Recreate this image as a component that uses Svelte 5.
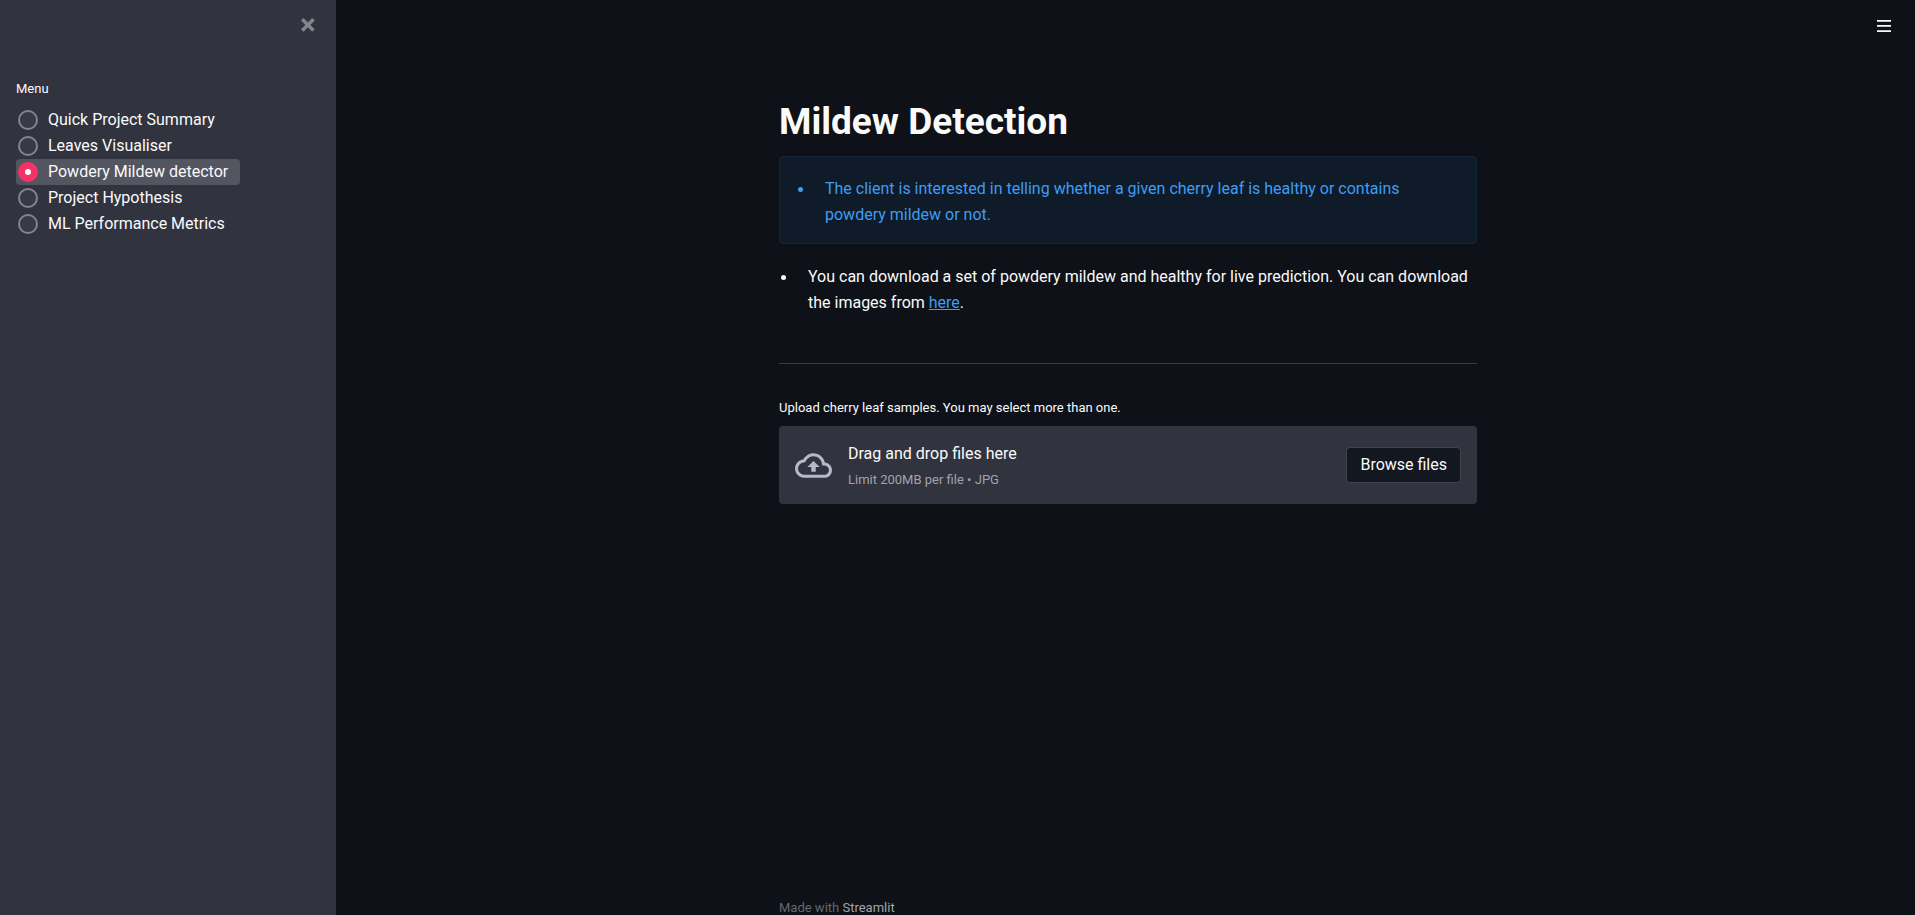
<script>
  const pages = [
    'Quick Project Summary',
    'Leaves Visualiser',
    'Powdery Mildew detector',
    'Project Hypothesis',
    'ML Performance Metrics'
  ];
  let page = $state('Powdery Mildew detector');
  let picker;
</script>

<div class="app">
  <aside class="sidebar">
    <div class="sidebar-top">
      <button class="icon-button close" aria-label="Close sidebar">
        <svg viewBox="0 0 8 8" width="14" height="14" fill="currentColor"><path d="M1.41 0l-1.41 1.41.72.72 1.78 1.81-1.78 1.78-.72.69 1.41 1.44.72-.72 1.81-1.81 1.78 1.81.69.72 1.44-1.44-.72-.69-1.81-1.78 1.81-1.81.72-.72-1.44-1.41-.69.72-1.78 1.78-1.81-1.78-.72-.72z" /></svg>
      </button>
    </div>
    <fieldset class="menu">
      <legend>Menu</legend>
      {#each pages as name}
        <label class="option" class:active={page === name}>
          <input type="radio" name="page" value={name} bind:group={page} />
          <span>{name}</span>
        </label>
      {/each}
    </fieldset>
  </aside>

  <div class="content">
    <header class="toolbar">
      <button class="icon-button" aria-label="Main menu">
        <svg viewBox="0 0 8 8" width="14" height="14" fill="currentColor"><path d="M0 .5v1h8v-1h-8zm0 2.97v1h8v-1h-8zm0 3v1h8v-1h-8z" /></svg>
      </button>
    </header>

    <main class="column">
      <h1>Mildew Detection</h1>

      <div class="alert">
        <ul>
          <li><p>The client is interested in telling whether a given cherry leaf is healthy or contains powdery mildew or not.</p></li>
        </ul>
      </div>

      <ul class="notes">
        <li><p>You can download a set of powdery mildew and healthy for live prediction. You can download the images from <a href="#images">here</a>.</p></li>
      </ul>

      <hr />

      <label class="upload-label" for="samples">Upload cherry leaf samples. You may select more than one.</label>
      <section class="dropzone">
        <svg class="cloud" viewBox="0 0 24 24" width="37" height="37" fill="currentColor"><path d="M19.35 10.04C18.67 6.59 15.64 4 12 4 9.11 4 6.6 5.64 5.35 8.04 2.34 8.36 0 10.91 0 14c0 3.31 2.69 6 6 6h13c2.76 0 5-2.24 5-5 0-2.64-2.05-4.78-4.65-4.96zM19 18H6c-2.21 0-4-1.79-4-4 0-2.05 1.53-3.76 3.56-3.97l1.07-.11.5-.95C8.08 7.14 9.94 6 12 6c2.62 0 4.88 1.86 5.39 4.43l.3 1.5 1.53.11c1.56.1 2.78 1.41 2.78 2.96 0 1.65-1.35 3-3 3zM8 13h2.55v3h2.9v-3H16l-4-4z" /></svg>
        <div class="hint">
          <span>Drag and drop files here</span>
          <small>Limit 200MB per file • JPG</small>
        </div>
        <input id="samples" type="file" accept=".jpg" multiple hidden bind:this={picker} />
        <button class="browse" onclick={() => picker.click()}>Browse files</button>
      </section>
    </main>

    <footer class="column">Made with <a href="#streamlit">Streamlit</a></footer>
  </div>
</div>

<style>
  :global(body) {
    margin: 0;
    background: #0e1117;
  }
  .app {
    display: flex;
    min-height: 100vh;
    color: #fafafa;
    font: 16px/26px Roboto, sans-serif;
  }
  .app * {
    box-sizing: border-box;
  }
  button {
    font: inherit;
    color: inherit;
    cursor: pointer;
  }
  .sidebar {
    flex: none;
    width: 336px;
    padding: 0 16px;
    background: #31333f;
  }
  .sidebar-top {
    display: flex;
    justify-content: flex-end;
    padding: 13px 0 41px;
  }
  .icon-button {
    display: grid;
    place-items: center;
    width: 24px;
    height: 24px;
    padding: 0;
    border: 0;
    background: none;
  }
  .close {
    color: #84858c;
  }
  .menu {
    display: flex;
    flex-direction: column;
    align-items: flex-start;
    margin: 0;
    padding: 0;
    border: 0;
  }
  legend {
    margin-bottom: 7px;
    padding: 0;
    font-size: 13px;
    line-height: 22px;
  }
  .option {
    display: flex;
    align-items: center;
    gap: 10px;
    height: 26px;
    padding: 0 12px 0 2px;
    border-radius: 4px;
    cursor: pointer;
  }
  .option.active {
    background: #535560;
  }
  .option input {
    appearance: none;
    width: 20px;
    height: 20px;
    margin: 0;
    border: 2px solid #84858c;
    border-radius: 50%;
    background: #363a46;
  }
  .option input:checked {
    border: 7px solid #f63366;
    background: #fafafa;
  }
  .content {
    display: flex;
    flex: 1;
    flex-direction: column;
    min-width: 0;
    padding-left: 5px;
  }
  .toolbar {
    display: flex;
    justify-content: flex-end;
    padding: 14px 19px 0 0;
  }
  .column {
    width: 100%;
    max-width: 698px;
    margin: 0 auto;
  }
  main {
    flex: 1;
    padding-top: 62px;
  }
  h1 {
    margin: 0 0 12px;
    font-size: 37px;
    font-weight: 700;
    line-height: 44px;
  }
  .alert {
    padding: 19px 16px 15px;
    border: 1px solid #10263b;
    border-radius: 4px;
    background: #0f1b29;
    color: #3d9df3;
  }
  ul {
    margin: 0;
    padding: 0;
    list-style: none;
  }
  li {
    display: grid;
    grid-template-columns: 27px 1fr;
    padding-left: 2px;
  }
  li::before {
    content: '';
    width: 5px;
    height: 5px;
    margin-top: 11px;
    border-radius: 50%;
    background: currentColor;
  }
  p {
    margin: 0;
  }
  .notes {
    padding: 20px 0 34px;
  }
  .notes a {
    color: #3d9df3;
  }
  hr {
    height: 1px;
    margin: 13px 0 33px;
    border: 0;
    background: #3a3c46;
  }
  .upload-label {
    display: block;
    margin-bottom: 7px;
    font-size: 13px;
    line-height: 22px;
  }
  .dropzone {
    display: flex;
    align-items: center;
    padding: 11px 16px;
    border-radius: 4px;
    background: #31333f;
  }
  .cloud {
    flex: none;
    margin-right: 16px;
    color: #b6b8cb;
  }
  .hint {
    display: flex;
    flex: 1;
    flex-direction: column;
    padding-top: 4px;
  }
  .hint small {
    color: #a3a4a9;
    font-size: 13px;
  }
  .browse {
    height: 36px;
    padding: 0 13px;
    border: 1px solid #41444d;
    border-radius: 4px;
    background: #131720;
    line-height: 24px;
  }
  footer {
    color: #66686c;
    font-size: 13px;
    line-height: 14px;
  }
  footer a {
    color: #a3a4a9;
    text-decoration: none;
  }
</style>
